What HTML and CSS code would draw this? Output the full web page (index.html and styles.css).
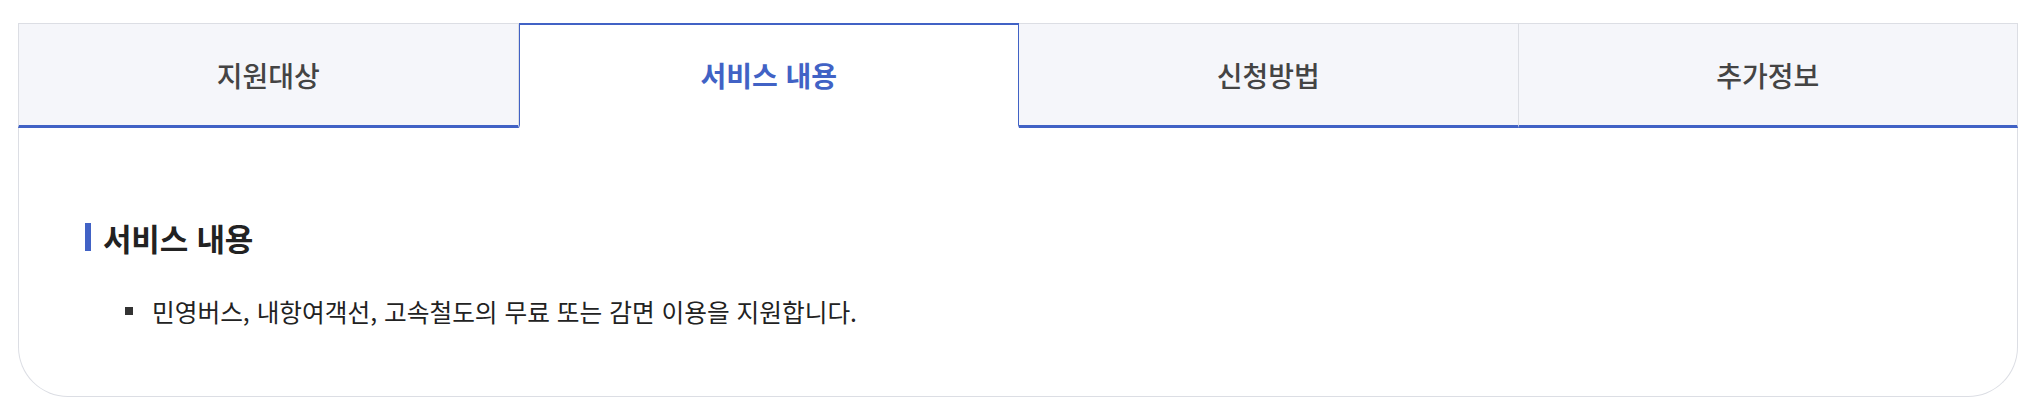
FILE: index.html
```html
<!DOCTYPE html>
<html lang="ko">
  <head>
    <meta charset="UTF-8" />
    <meta name="viewport" content="width=device-width, initial-scale=1.0" />
    <title>서비스 내용</title>
    <link rel="stylesheet" href="styles.css">
  </head>
  <body>
    <!-- 탭 + 내용 박스 -->
    <div class="tab-box">
      <ul class="tabs">
        <li class="tab">지원대상</li>
        <li class="tab active">서비스 내용</li>
        <li class="tab">신청방법</li>
        <li class="tab">추가정보</li>
      </ul>

      <div class="tab-content">
        <h3 class="section-title">서비스 내용</h3>
        <ul class="bullet-list">
          <li>민영버스, 내항여객선, 고속철도의 무료 또는 감면 이용을 지원합니다.</li>
        </ul>
      </div>
    </div>
  </body>
</html>
```

FILE: styles.css
```css
/* 기본 */
body {
  margin: 0;
  padding: 23px 18px 0;
  background: #fff;
  font-family: "Noto Sans CJK KR", "Noto Sans", sans-serif;
  color: #222;
}

ul {
  margin: 0;
  padding: 0;
  list-style: none;
}

/* 탭 박스 */
.tab-box {
  width: 2000px;
  margin: 0 auto;
}

.tabs {
  display: flex;
}

.tab {
  flex: 1;
  height: 101px;
  display: flex;
  align-items: center;
  justify-content: center;
  background: #f5f6fa;
  border-top: 1px solid #dcdee4;
  border-right: 1px solid #dcdee4;
  border-bottom: 3px solid #4162c5;
  font-size: 28px;
  font-weight: 500;
  color: #444;
  cursor: pointer;
}

.tab:first-child {
  border-left: 1px solid #dcdee4;
}

/* 선택된 탭 */
.tab.active {
  background: #fff;
  border: 1px solid #4162c5;
  border-top: 2px solid #4162c5;
  border-bottom: 3px solid #fff;
  height: 100px;
  color: #4162c5;
  font-weight: 700;
}

/* 내용 */
.tab-content {
  box-sizing: border-box;
  height: 269px;
  border: 1px solid #dcdee4;
  border-top: 0;
  border-radius: 0 0 50px 50px;
  padding: 95px 66px 0;
}

.section-title {
  margin: 0;
  display: flex;
  align-items: center;
  gap: 12px;
  height: 28px;
  font-size: 31px;
  font-weight: 700;
  color: #222;
  letter-spacing: -0.2px;
}

.section-title::before {
  content: "";
  width: 6px;
  height: 28px;
  background: #4162c5;
}

.bullet-list {
  margin-top: 43px;
  padding-left: 40px;
}

.bullet-list li {
  display: flex;
  align-items: center;
  gap: 19px;
  font-size: 24.7px;
  line-height: 34px;
  color: #222;
}

.bullet-list li::before {
  content: "";
  width: 8px;
  height: 8px;
  background: #333;
  flex-shrink: 0;
}
```
